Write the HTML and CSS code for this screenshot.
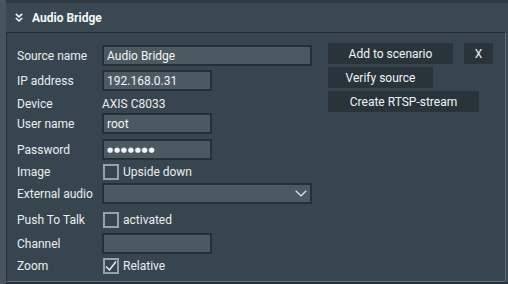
FILE: index.html
```html
<!DOCTYPE html>
<html>
<head>
<meta charset="utf-8">
<link rel="stylesheet" href="styles.css">
</head>
<body>
<div class="main">
  <div class="topbar"></div>
  <div class="header">
    <svg class="chev" width="8" height="10" viewBox="0 0 8 10">
      <path d="M0.8 0.8 L4 3.8 L7.2 0.8 M0.8 5 L4 8 L7.2 5" fill="none" stroke="#f2f5f6" stroke-width="1.6"/>
    </svg>
    <span class="title">Audio Bridge</span>
  </div>
  <div class="panel">
    <div class="form">
      <div class="row"><span class="label">Source name</span><div class="input wide">Audio Bridge</div></div>
      <div class="row"><span class="label">IP address</span><div class="input">192.168.0.31</div></div>
      <div class="row short"><span class="label">Device</span><span class="value">AXIS C8033</span></div>
      <div class="row"><span class="label">User name</span><div class="input">root</div></div>
      <div class="row"><span class="label">Password</span><div class="input"><span class="dots">●●●●●●●</span></div></div>
      <div class="row short"><span class="label">Image</span><span class="check"></span><span class="value">Upside down</span></div>
      <div class="row"><span class="label">External audio</span><div class="input wide select">
        <svg class="caret" width="12" height="7" viewBox="0 0 12 7"><path d="M0.7 0.7 L6 5.8 L11.3 0.7" fill="none" stroke="#d8dee1" stroke-width="1.3"/></svg>
      </div></div>
      <div class="row short"><span class="label">Push To Talk</span><span class="check"></span><span class="value">activated</span></div>
      <div class="row"><span class="label">Channel</span><div class="input"></div></div>
      <div class="row short"><span class="label">Zoom</span><span class="check checked">
        <svg width="12" height="12" viewBox="0 0 12 12"><path d="M1 6.5 L4.5 10 L11 1.5" fill="none" stroke="#f0f3f4" stroke-width="1.4"/></svg>
      </span><span class="value">Relative</span></div>
    </div>
    <div class="buttons">
      <div class="btnrow">
        <div class="btn w-add">Add to scenario</div>
        <div class="btn w-x">X</div>
      </div>
      <div class="btn w-verify">Verify source</div>
      <div class="btn w-rtsp">Create RTSP-stream</div>
    </div>
  </div>
  <div class="bottombar"></div>
</div>
</body>
</html>
```
FILE: styles.css
```css
html, body {
  margin: 0;
  padding: 0;
}
body {
  width: 508px;
  height: 284px;
  background: #46545b;
  font-family: Roboto, "Noto Sans", sans-serif;
  font-size: 12px;
  color: #e9eef0;
  overflow: hidden;
}
.main {
  margin-left: 6px;
  height: 284px;
  display: flex;
  flex-direction: column;
  background: #3b4a52;
}
.topbar {
  height: 3px;
  background: #2e3a40;
}
.header {
  height: 29px;
  display: flex;
  align-items: center;
  padding-left: 9px;
  background: #3a4951;
}
.chev {
  display: block;
  margin-top: 1px;
}
.title {
  margin-left: 9px;
  font-weight: bold;
  color: #f4f7f8;
  font-size: 12px;
}
.panel {
  height: 248px;
  display: flex;
  background: #37464e;
  border-top: 1px solid #222c31;
  border-left: 1px solid #263137;
  border-right: 1px solid #5c6a71;
  border-bottom: 1px solid #5c6a71;
  margin-right: 2px;
}
.form {
  width: 296px;
  padding-left: 10px;
  padding-top: 12px;
  display: grid;
  grid-template-rows: 21px 25px 21px 22px 26px 20px 24px 24px 26px 20px;
}
.row {
  align-self: end;
  display: flex;
  align-items: center;
  height: 21px;
}
.row.short {
  height: 16px;
}
.label {
  width: 85px;
  flex: none;
  white-space: nowrap;
}
.input {
  box-sizing: border-box;
  width: 110px;
  height: 21px;
  background: #4b5961;
  border: 2px solid #263137;
  padding-left: 3px;
  display: flex;
  align-items: center;
  white-space: nowrap;
  color: #f2f5f6;
}
.input.wide {
  width: 210px;
}
.select {
  justify-content: flex-end;
  padding-right: 3px;
}
.caret {
  display: block;
}
.dots {
  font-size: 7px;
  letter-spacing: 0.8px;
  font-family: "DejaVu Sans", sans-serif;
}
.value {
  white-space: nowrap;
}
.check {
  box-sizing: border-box;
  width: 16px;
  height: 16px;
  border: 2px solid #96a2a8;
  margin-left: 1px;
  margin-right: 4px;
  display: flex;
  align-items: center;
  justify-content: center;
}
.buttons {
  margin-left: 15px;
  padding-top: 10px;
  display: flex;
  flex-direction: column;
  gap: 3px;
}
.btnrow {
  display: flex;
  gap: 11px;
}
.btn {
  height: 21px;
  background: #28333a;
  display: flex;
  align-items: center;
  justify-content: center;
  color: #f2f5f6;
  white-space: nowrap;
}
.w-add { width: 125px; }
.w-x { width: 29px; }
.w-verify { width: 105px; }
.w-rtsp { width: 151px; }
.bottombar {
  flex: 1;
  background: #263036;
}
```
